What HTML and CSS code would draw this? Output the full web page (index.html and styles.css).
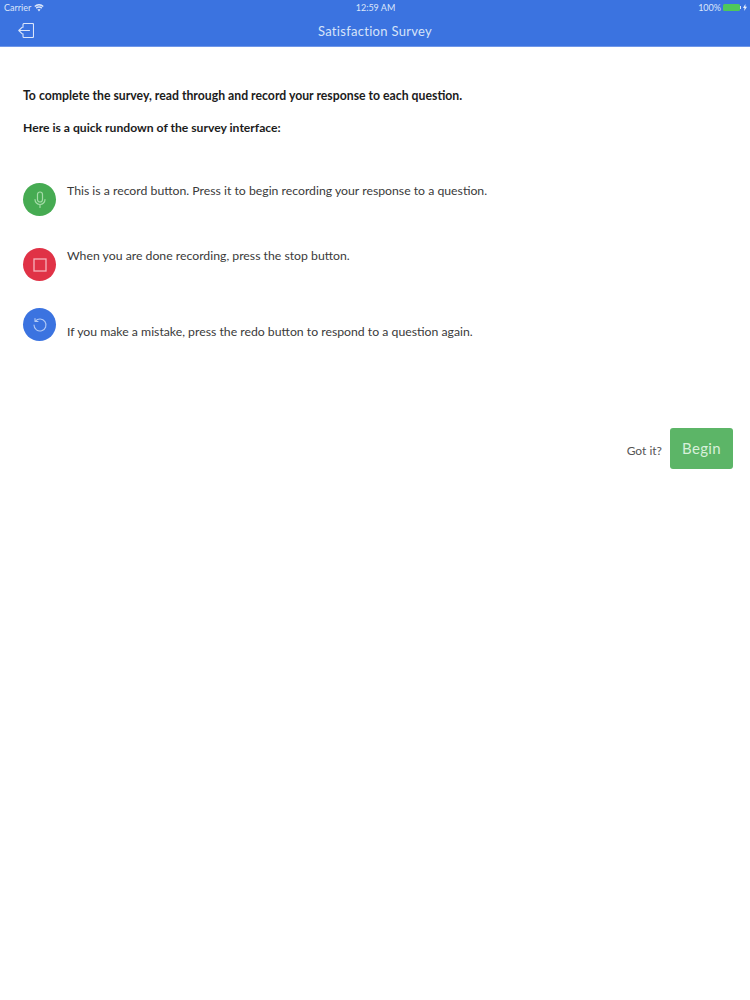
FILE: index.html
```html
<!DOCTYPE html>
<html lang="en">
<head>
<meta charset="utf-8">
<title>Satisfaction Survey</title>
<link rel="stylesheet" href="styles.css">
</head>
<body>
<header class="header">
  <div class="status">
    <div class="status-left">
      <span>Carrier</span>
      <svg class="wifi" width="10" height="8" viewBox="0 0 10 8"><path d="M5 7.6 3.4 5.6a2.6 2.6 0 0 1 3.2 0zM2.6 4.7 1.7 3.6a5.2 5.2 0 0 1 6.6 0L7.4 4.7a3.9 3.9 0 0 0-4.8 0zM1.2 3 .3 1.9a7.4 7.4 0 0 1 9.4 0L8.8 3a6 6 0 0 0-7.6 0z" fill="#dbe6fa"/></svg>
    </div>
    <span class="status-time">12:59 AM</span>
    <div class="status-right">
      <span>100%</span>
      <span class="battery"></span>
      <span class="battery-tip"></span>
      <svg width="4" height="7" viewBox="0 0 4 7"><path d="M2.4 0 0 4h1.5L1.2 7 4 2.8H2.4z" fill="#e6eefc"/></svg>
    </div>
  </div>
  <div class="nav">
    <svg class="back" width="16" height="15" viewBox="0 0 16 15" fill="none" stroke="#dbe6fa" stroke-width="1.100" stroke-linecap="round" stroke-linejoin="round"><path d="M5 4.200V1.500a1 1 0 0 1 1-1h8.500a1 1 0 0 1 1 1v12a1 1 0 0 1-1 1H6a1 1 0 0 1-1-1v-2.700M11.500 7.500H.8M4 4.300.8 7.500 4 10.700"/></svg>
    <h1 class="title">Satisfaction Survey</h1>
  </div>
</header>
<main class="content">
  <p class="lead">To complete the survey, read through and record your response to each question.</p>
  <p class="lead lead-second">Here is a quick rundown of the survey interface:</p>
  <ul class="items">
    <li class="item item-record">
      <span class="round round-green">
        <svg width="14" height="18" viewBox="0 0 14 18" fill="none" stroke="#a5dca8" stroke-width="1.200" stroke-linecap="round"><rect x="4.500" y="1" width="5" height="10" rx="2.500"/><path d="M2 8.500a5 5 0 0 0 10 0M7 13.500V16.500"/></svg>
      </span>
      <span class="item-text">This is a record button. Press it to begin recording your response to a question.</span>
    </li>
    <li class="item item-stop">
      <span class="round round-red">
        <svg width="14" height="14" viewBox="0 0 14 14" fill="none" stroke="#f6b3bc" stroke-width="1.300"><rect x="1" y="1" width="12" height="12"/></svg>
      </span>
      <span class="item-text">When you are done recording, press the stop button.</span>
    </li>
    <li class="item item-redo">
      <span class="round round-blue">
        <svg width="16" height="16" viewBox="0 0 16 16" fill="none" stroke="#b3cbf5" stroke-width="1.100" stroke-linecap="round" stroke-linejoin="round"><path d="M3.300 4.300A6 6 0 1 1 2 8M3 1.500v3h3"/></svg>
      </span>
      <span class="item-text item-text-low">If you make a mistake, press the redo button to respond to a question again.</span>
    </li>
  </ul>
  <div class="actions">
    <span class="got">Got it?</span>
    <button class="begin" type="button">Begin</button>
  </div>
</main>
</body>
</html>
```
FILE: styles.css
```css
* { box-sizing: border-box; }
html, body { margin: 0; padding: 0; background: #fff; }
body { font-family: "Lato", "Liberation Sans", sans-serif; color: #2b2b2b; height: 1000px; overflow: hidden; }

.header { height: 47px; background: #3b73e0; color: #dbe6fa; border-bottom: 1px solid #6f97e8; }
.status { height: 15px; padding: 0 3px 0 4px; display: grid; grid-template-columns: 1fr auto 1fr; align-items: center; font-size: 9px; }
.status-left { display: flex; align-items: center; gap: 3px; }
.status-time { text-align: center; }
.status-right { display: flex; align-items: center; justify-content: flex-end; }
.status-right span:first-child { margin-right: 2px; }
.battery { width: 17px; height: 7px; border-radius: 1.500px; background: #4fc75a; }
.battery-tip { width: 1px; height: 3px; background: #dbe6fa; margin-right: 2px; }

.nav { height: 31px; position: relative; display: flex; align-items: center; justify-content: center; }
.back { position: absolute; left: 18px; top: 8px; }
.title { margin: 0; font-size: 13px; font-weight: 400; letter-spacing: 0.300px; color: #d6e3f9; }

.content { padding: 41px 17px 0 23px; }
.lead { margin: 0; font-size: 12.250px; line-height: 16px; font-weight: 700; color: #1c1c1c; }
.lead-second { margin-top: 16px; font-size: 12.150px; }

.items { list-style: none; margin: 47px 0 0; padding: 0; }
.item { display: flex; gap: 11px; align-items: flex-start; font-size: 12.250px; line-height: 16px; color: #3a3a3a; }
.item-record { height: 65px; }
.item-stop { height: 60px; }
.item-redo { height: 120px; }
.item-text-low { padding-top: 16px; }

.round { width: 33px; height: 33px; flex: none; border-radius: 50%; display: flex; align-items: center; justify-content: center; }
.round-green { background: #46ab52; }
.round-red { background: #e03246; }
.round-blue { background: #3b73e0; }

.actions { display: flex; justify-content: flex-end; align-items: center; gap: 8px; }
.got { font-size: 12px; color: #555; padding-top: 4px; }
.begin { width: 63px; height: 41px; border: 0; border-radius: 3px; background: #5cb567; color: #d8f0da; font: 400 15px "Lato", "Liberation Sans", sans-serif; letter-spacing: 0.300px; padding: 0 0 2px; }
```
